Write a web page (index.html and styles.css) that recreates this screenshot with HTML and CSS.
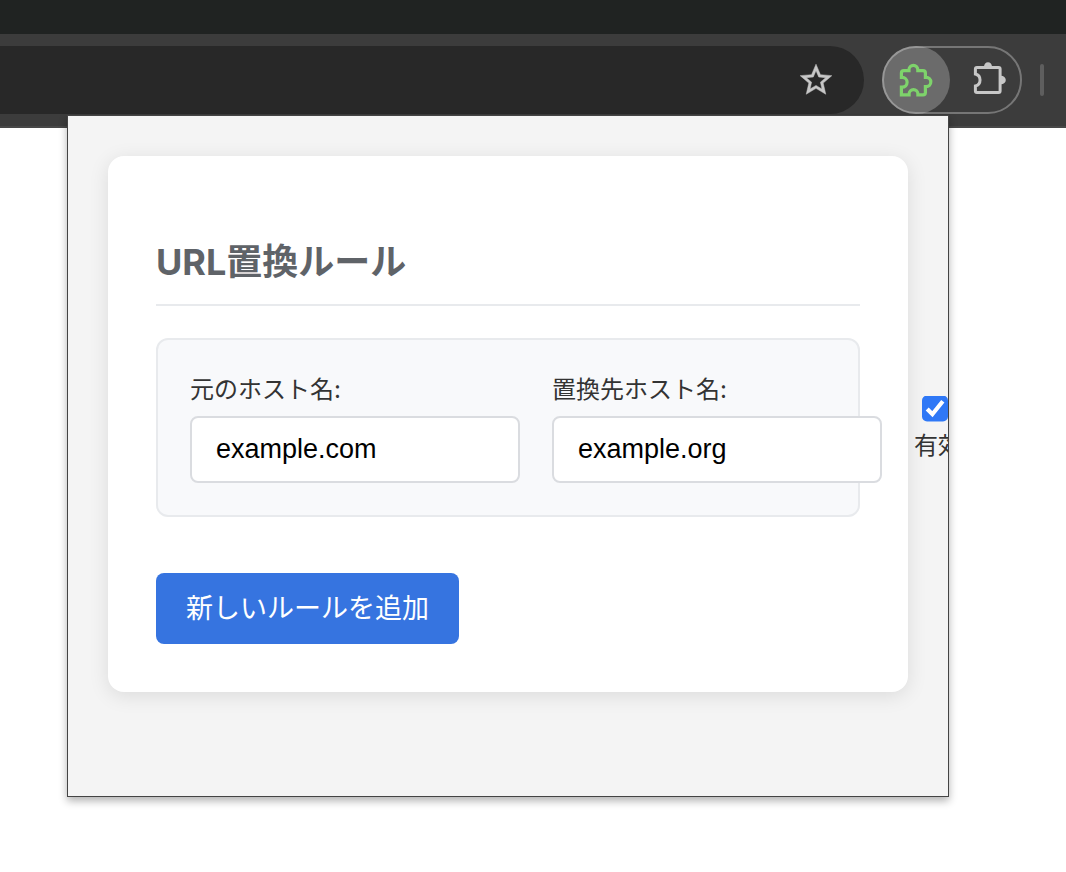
FILE: index.html
```html
<!DOCTYPE html>
<html lang="ja">
<head>
<meta charset="utf-8">
<title>URL置換ルール</title>
<link rel="stylesheet" href="styles.css">
</head>
<body>
<header class="browser">
  <div class="tabstrip"></div>
  <div class="toolbar">
    <div class="omnibox">
      <button class="icon-button" type="button" aria-label="ブックマーク">
        <svg width="38" height="38" viewBox="0 0 24 24" fill="#c7c7c7" stroke="#c7c7c7" stroke-width=".3"><path d="M22 9.24l-7.19-.62L12 2 9.19 8.63 2 9.24l5.46 4.73L5.82 21 12 17.27 18.18 21l-1.63-7.03L22 9.24zM12 15.4l-3.76 2.27 1-4.28-3.32-2.88 4.38-.38L12 6.1l1.71 4.04 4.38.38-3.32 2.88 1 4.28L12 15.4z"/></svg>
      </button>
    </div>
    <div class="extensions">
      <button class="icon-button extension-active" type="button" aria-label="URL置換">
        <svg width="36" height="36" viewBox="0 0 36 36" fill="none" stroke="#7ed36b" stroke-width="3.2"><path d="M3.4 32.8V25.2H4.2A4.6 4.6 0 0 0 4.2 15.4H3.4V11Q3.4 8.6 5.8 8.6H11V7.8A4.3 4.3 0 0 1 19.8 7.8V8.6H25Q27.4 8.6 27.4 11V15.4H28.2A4.6 4.6 0 0 1 28.2 24.6H27.4V30.4Q27.4 32.8 25 32.8H19.9V32.1A4.4 4.4 0 0 0 11.1 32.1V32.8Z"/></svg>
      </button>
      <button class="icon-button" type="button" aria-label="拡張機能">
        <svg width="36" height="36" viewBox="0 2 36 36"><path d="M3.4 14V9Q3.4 7.5 4.9 7.5H26.6Q28.1 7.5 28.1 9V31Q28.1 32.5 26.6 32.5H4.9Q3.4 32.5 3.4 31V26A6.2 6.2 0 0 0 3.4 14Z" fill="none" stroke="#c7c7c7" stroke-width="3"/><path d="M12 7A4 4.8 0 0 1 20 7ZM29 15.7A4.8 4.3 0 0 1 29 24.3Z" fill="#c7c7c7"/></svg>
      </button>
    </div>
    <div class="divider"></div>
  </div>
</header>

<main class="popup">
  <section class="card">
    <h2 class="title">URL置換ルール</h2>
    <div class="rule">
      <div class="field">
        <label for="source">元のホスト名:</label>
        <input class="text-input" id="source" type="text" value="example.com">
      </div>
      <div class="field">
        <label for="target">置換先ホスト名:</label>
        <input class="text-input" id="target" type="text" value="example.org">
      </div>
      <div class="toggle">
        <input class="checkbox" id="enabled" type="checkbox" checked>
        <label for="enabled">有効</label>
      </div>
    </div>
    <button class="add-button" type="button">新しいルールを追加</button>
  </section>
</main>
</body>
</html>
```

FILE: styles.css
```css
* {
  box-sizing: border-box;
}

body {
  margin: 0;
  min-height: 100vh;
  background: #fff;
  color: #333;
  font-family: Inter, "Noto Sans CJK JP", sans-serif;
  position: relative;
}

.tabstrip {
  height: 34px;
  background: #202322;
}

.toolbar {
  display: flex;
  align-items: center;
  padding: 12px 22px 12px 0;
  gap: 18px;
  background: #3c3c3c;
  border-bottom: 2px solid #484848;
}

.omnibox {
  flex: 1;
  display: flex;
  align-items: center;
  justify-content: flex-end;
  height: 68px;
  padding-right: 29px;
  border-radius: 0 34px 34px 0;
  background: #282828;
}

.icon-button {
  display: flex;
  align-items: center;
  justify-content: center;
  padding: 0;
  border: 0;
  background: none;
}

.extensions {
  position: relative;
  display: flex;
  gap: 22px;
  height: 68px;
  padding-right: 14px;
  border-radius: 34px;
}

.extensions::after {
  content: "";
  position: absolute;
  inset: 0;
  border: 2px solid rgba(255, 255, 255, 0.3);
  border-radius: 34px;
  pointer-events: none;
}

.extension-active {
  width: 68px;
  border-radius: 50%;
  background: #6b6b6b;
}

.divider {
  width: 4px;
  height: 32px;
  border-radius: 2px;
  background: #5e5e5e;
}

.popup {
  position: absolute;
  top: 115px;
  left: 67px;
  right: 117px;
  padding: 40px 40px 104px;
  overflow: hidden;
  border: 1px solid #444;
  background: #f4f4f4;
  box-shadow: 0 4px 8px rgba(0, 0, 0, 0.3);
}

.card {
  padding: 48px;
  border-radius: 16px;
  background: #fff;
  box-shadow: 0 4px 20px rgba(0, 0, 0, 0.1);
}

.title {
  margin: 36px 0 32px;
  padding-bottom: 20px;
  border-bottom: 2px solid #e8eaed;
  color: #5f6368;
  font-size: 36px;
  line-height: 44px;
}

.rule {
  display: flex;
  align-items: center;
  gap: 32px;
  padding: 32px;
  border: 2px solid #e8eaed;
  border-radius: 12px;
  background: #f8f9fb;
  font-size: 24px;
  line-height: 36px;
}

.field {
  display: flex;
  flex: none;
  flex-direction: column;
  gap: 8px;
}

.text-input {
  width: 330px;
  height: 67px;
  padding: 0 24px;
  border: 2px solid #dadce0;
  border-radius: 8px;
  background: #fff;
  color: #000;
  font-family: "Liberation Sans", Arial, sans-serif;
  font-size: 27px;
}

.toggle {
  display: flex;
  flex: none;
  flex-direction: column;
  gap: 6px;
  padding-top: 4px;
}

.checkbox {
  width: 26px;
  height: 26px;
  margin: 0 0 0 8px;
  border-radius: 5px;
  overflow: hidden;
  clip-path: inset(0 round 5px);
  accent-color: #2f78f6;
}

.add-button {
  display: block;
  height: 71px;
  margin-top: 56px;
  padding: 0 30px 4px;
  border: 0;
  border-radius: 8px;
  background: #3674e0;
  color: #fff;
  font-family: inherit;
  font-size: 27px;
}
```
